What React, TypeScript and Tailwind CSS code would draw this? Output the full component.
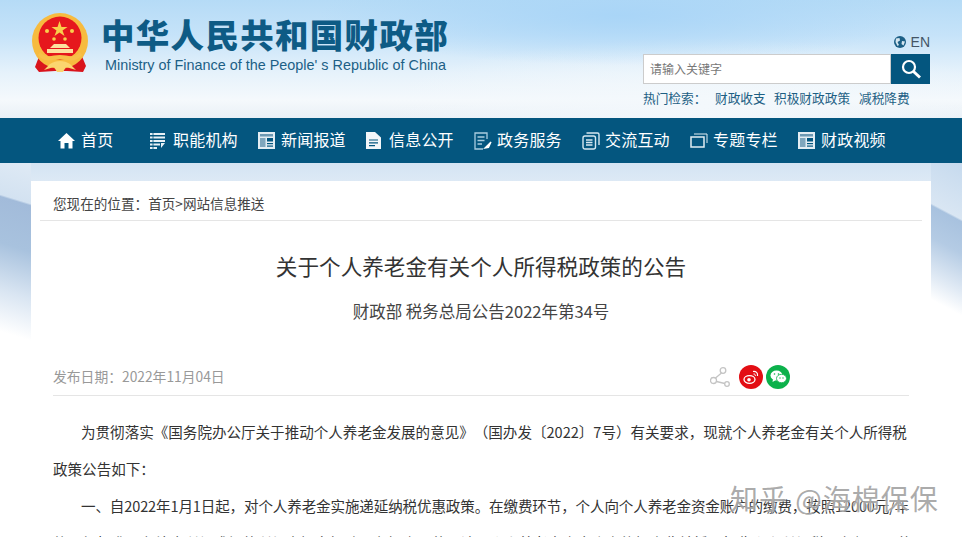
import type { ReactNode } from "react"

const cjk = "font-['Noto_Sans_CJK_SC','Liberation_Sans',sans-serif] [text-spacing-trim:space-all]"

function Emblem() {
  return (
    <svg width="60" height="62" viewBox="0 0 60 62">
      <path d="M9 42 L4 55 L8 60 L24 59 L36 59 L52 60 L55 54 L50 42 Z" fill="#d9141c" />
      <circle cx="29" cy="29" r="28" fill="#f7bb3f" />
      <circle cx="29" cy="26" r="21.5" fill="#e6171d" />
      <path d="M28.500 9 L30.500 15 L36.500 15 L31.500 18.500 L33.500 24 L28.500 20.500 L23.500 24 L25.500 18.500 L20.500 15 L26.500 15 Z" fill="#f9cf4c" />
      <circle cx="16" cy="19" r="2" fill="#f9cf4c" />
      <circle cx="41" cy="19" r="2" fill="#f9cf4c" />
      <circle cx="23" cy="27" r="1.800" fill="#f9cf4c" />
      <circle cx="34" cy="27" r="1.800" fill="#f9cf4c" />
      <path d="M19 36 L23 32 L35 32 L39 36 Z M16 37 H42 V41 H16 Z" fill="#fde2a0" />
      <path d="M7 43 C15 52 21 47 29 47 C37 47 43 52 51 43 L49 40 C43 47 37 43 29 43 C21 43 15 47 9 40 Z" fill="#f8c04a" />
      <path d="M19 52 C25 48 33 48 39 52 L45 58 L35 55 L32 60 H26 L23 55 L13 58 Z" fill="#fbd56f" />
    </svg>
  )
}

function HomeIcon() {
  return (
    <svg width="17" height="17" viewBox="0 0 17 17" fill="#fff">
      <path d="M8.500 1 L17 9 H14.500 V16.500 H10.500 V11 H6.500 V16.500 H2.500 V9 H0 Z" />
    </svg>
  )
}

function ListIcon() {
  return (
    <svg width="16" height="17" viewBox="0 0 16 17" fill="#e8f1f6">
      <path d="M0 1 H15 V3 H0 Z M0 4.500 H15 V6.500 H0 Z M0 8 H15 V10 H0 Z M0 11.500 H10 V13.500 H0 Z M0 15 H7 V17 H0 Z M11 11 H15 L11 16 Z" />
      <path d="M3 0 V17" stroke="#04567f" strokeWidth="0.800" />
    </svg>
  )
}

function NewsIcon() {
  return (
    <svg width="17" height="17" viewBox="0 0 17 17">
      <rect width="17" height="17" fill="#e3edf3" />
      <rect x="2" y="2" width="13" height="2.500" fill="#6d99b3" />
      <rect x="2" y="6" width="5.500" height="9" fill="#7fa6bd" />
      <rect x="9" y="6" width="6" height="3.500" fill="#04567f" />
      <rect x="9" y="11" width="6" height="1.200" fill="#04567f" />
      <rect x="9" y="13.500" width="6" height="1.200" fill="#04567f" />
    </svg>
  )
}

function DocIcon() {
  return (
    <svg width="15" height="17" viewBox="0 0 15 17">
      <path d="M0 0 H9 L15 5.500 V17 H0 Z" fill="#f2f6f9" />
      <path d="M3 8 H12 M3 10.800 H12 M3 13.600 H9" stroke="#04567f" strokeWidth="1.200" />
    </svg>
  )
}

function ServiceIcon() {
  return (
    <svg width="18" height="18" viewBox="0 0 18 18" fill="none" stroke="#a9cde0" strokeWidth="1.300">
      <path d="M13 7 V1 H1 V17 H9" />
      <path d="M3.500 5 H10.500 M3.500 8.500 H10.500 M3.500 12 H8" />
      <path d="M11 16 L17 10 L14.500 15.500 Z" fill="#fff" stroke="#fff" />
    </svg>
  )
}

function ChatIcon() {
  return (
    <svg width="18" height="18" viewBox="0 0 18 18" fill="none" stroke="#d6e8f1" strokeWidth="1.400">
      <rect x="1" y="4" width="12.500" height="13" rx="2" />
      <path d="M4.500 1 H15.500 Q17 1 17 2.500 V13" />
      <path d="M4 8 H10.500 M4 10.500 H10.500 M4 13 H10.500" />
    </svg>
  )
}

function TopicIcon() {
  return (
    <svg width="18" height="15" viewBox="0 0 18 15" fill="none" stroke="#e2eef4" strokeWidth="1.500">
      <rect x="1" y="4" width="13" height="10" />
      <path d="M4 1 H17 V10" strokeWidth="1" />
    </svg>
  )
}

function SearchIcon() {
  return (
    <svg width="20" height="20" viewBox="0 0 20 20" fill="none" stroke="#fff">
      <circle cx="8" cy="8" r="6" strokeWidth="2.200" />
      <path d="M12.500 12.500 L19 18.500" strokeWidth="3" />
    </svg>
  )
}

function GlobeIcon() {
  return (
    <svg width="12" height="12" viewBox="0 0 12 12">
      <circle cx="6" cy="6" r="6" fill="#1c5f86" />
      <path d="M2 2.500 L5.500 2 L6 4.500 L3.500 6 L5 9 L3.500 10 L1.500 6 Z M8 5 L11 5.500 L9.500 9.500 L7.500 8 Z" fill="#d5e6f0" />
    </svg>
  )
}

function ShareIcon() {
  return (
    <svg width="20" height="20" viewBox="0 0 20 20" fill="none" stroke="#c4c4c4" strokeWidth="1.300">
      <circle cx="13" cy="3.500" r="2.800" />
      <circle cx="3.500" cy="13.500" r="3" />
      <circle cx="17" cy="17" r="2.300" />
      <path d="M11.500 6 L5.500 11 M6.500 14.500 L14.800 16.500" />
    </svg>
  )
}

function WeiboIcon() {
  return (
    <div className="flex h-[24px] w-[24px] items-center justify-center rounded-full bg-[#e30e14]">
      <svg width="16" height="14" viewBox="0 0 16 14" fill="none" stroke="#fff">
        <ellipse cx="6.500" cy="9.500" rx="5.500" ry="3.800" strokeWidth="1.300" />
        <circle cx="6" cy="9.800" r="1.800" fill="#fff" stroke="none" />
        <path d="M10 1.500 C13 1 15 3 14.500 6" strokeWidth="1.200" />
        <path d="M10.500 4 C12 3.800 12.500 4.800 12.300 6" strokeWidth="1" />
      </svg>
    </div>
  )
}

function WechatIcon() {
  return (
    <div className="flex h-[24px] w-[24px] items-center justify-center rounded-full bg-[#0cb14b]">
      <svg width="17" height="14" viewBox="0 0 17 14">
        <ellipse cx="6.500" cy="5.500" rx="6" ry="5" fill="#fff" />
        <path d="M3 9 L2.500 12 L6 10 Z" fill="#fff" />
        <ellipse cx="11.500" cy="8.500" rx="5" ry="4.200" fill="#fff" stroke="#0cb14b" strokeWidth="0.800" />
        <circle cx="4.500" cy="4" r="0.800" fill="#0cb14b" />
        <circle cx="8.500" cy="4" r="0.800" fill="#0cb14b" />
        <circle cx="10" cy="8" r="0.700" fill="#0cb14b" />
        <circle cx="13" cy="8" r="0.700" fill="#0cb14b" />
      </svg>
    </div>
  )
}

const navItems: { label: string; icon: ReactNode; width: string }[] = [
  { label: "首页", icon: <HomeIcon />, width: "w-[92px]" },
  { label: "职能机构", icon: <ListIcon />, width: "w-[108px]" },
  { label: "新闻报道", icon: <NewsIcon />, width: "w-[108px]" },
  { label: "信息公开", icon: <DocIcon />, width: "w-[108px]" },
  { label: "政务服务", icon: <ServiceIcon />, width: "w-[108px]" },
  { label: "交流互动", icon: <ChatIcon />, width: "w-[108px]" },
  { label: "专题专栏", icon: <TopicIcon />, width: "w-[108px]" },
  { label: "财政视频", icon: <NewsIcon />, width: "w-[108px]" },
]

export default function App() {
  return (
    <div className={`relative h-[537px] w-[962px] overflow-hidden bg-white ${cjk}`}>
      <header className="flex h-[118px] justify-between bg-[radial-gradient(ellipse_300px_50px_at_620px_15px,#a9d5f7_0%,transparent_100%),radial-gradient(ellipse_320px_70px_at_700px_108px,#f3f8fc_0%,transparent_100%),linear-gradient(180deg,#b5dbf6_0%,#c6e3f9_30%,#e6f2fb_62%,#f5f9fc_85%,#e9f0f6_100%)] pl-[31px] pr-[32px]">
        <div className="flex items-start pt-[12px]">
          <Emblem />
          <div className="ml-[10px] flex flex-col">
            <div className="mt-[1px] h-[39px] whitespace-nowrap text-[33.500px] leading-[41px] font-black tracking-[1.300px] text-[#0e5b85]">
              中华人民共和国财政部
            </div>
            <div className="mt-[4px] ml-[4px] font-['Liberation_Sans',sans-serif] text-[14.400px] leading-[18px] whitespace-nowrap text-[#1c5f86]">
              Ministry of Finance of the People' s Republic of China
            </div>
          </div>
        </div>
        <div className="flex w-[287px] flex-col pt-[33px]">
          <div className="flex h-[18px] items-center justify-end gap-[5px] font-['Liberation_Sans',sans-serif] text-[14px] text-[#445566]">
            <GlobeIcon />
            <span>EN</span>
          </div>
          <div className="mt-[3px] flex h-[30px]">
            <div className="flex flex-1 items-center border border-[#cccccc] bg-white pl-[6px] text-[12px] text-[#777777]">
              请输入关键字
            </div>
            <button className="flex w-[39px] items-center justify-center bg-[#04567f] pl-[1px]">
              <SearchIcon />
            </button>
          </div>
          <div className="mt-[5px] flex h-[18px] items-center whitespace-nowrap text-[12.700px] text-[#1d5f84]">
            <span className="w-[72px]">热门检索：</span>
            <span className="w-[59px]">财政收支</span>
            <span className="w-[85px]">积极财政政策</span>
            <span>减税降费</span>
          </div>
        </div>
      </header>

      <nav className="flex h-[45px] items-center bg-[#04567f] pl-[58px]">
        {navItems.map((item) => (
          <div key={item.label} className={`flex items-center ${item.width}`}>
            <div className="flex w-[23px] shrink-0 items-center">{item.icon}</div>
            <span className="-mt-[3px] text-[16px] leading-[20px] tracking-[0.200px] whitespace-nowrap text-white">
              {item.label}
            </span>
          </div>
        ))}
      </nav>

      <main className="flex h-[374px]">
        <div className="w-[31px] bg-[linear-gradient(197deg,#dfeaf5_0px,#d3e2f1_39px,#a2bbda_41px,#a8c2de_85px,#d9e5f2_130px,#ffffff_170px)]" />
        <div className="w-[900px] bg-[linear-gradient(180deg,#d4e4f3_0px,#dde9f5_18px,#ffffff_18px)] pt-[18px]">
          <div className="h-[400px] bg-white px-[22px]">
            <div className="-mx-[13px] h-[40px] border-b border-[#e5e5e5] px-[13px] text-[13.600px] leading-[44px] text-[#444444]">
              您现在的位置：首页&gt;网站信息推送
            </div>
            <h1 className="mt-[29px] text-center text-[21.600px] leading-[32px] font-normal text-[#333333]">
              关于个人养老金有关个人所得税政策的公告
            </h1>
            <p className="mt-[17px] text-center text-[16.500px] leading-[24px] text-[#444444]">
              财政部 税务总局公告2022年第34号
            </p>
            <div className="mt-[34px] flex h-[39px] items-start justify-between border-b border-[#e5e5e5] pt-[5px]">
              <span className="text-[13.800px] leading-[28px] text-[#999999]">发布日期：2022年11月04日</span>
              <div className="mt-[3px] mr-[119px] flex items-center gap-[3px]">
                <div className="mr-[6px]">
                  <ShareIcon />
                </div>
                <WeiboIcon />
                <WechatIcon />
              </div>
            </div>
            <div className="mt-[17px] w-[856px] text-[14.550px] leading-[37px] text-[#333333]">
              <p className="indent-[28px] whitespace-nowrap">
                为贯彻落实《国务院办公厅关于推动个人养老金发展的意见》（国办发〔2022〕7号）有关要求，现就个人养老金有关个人所得税
              </p>
              <p>政策公告如下：</p>
              <p className="indent-[28px] tracking-[-0.130px] whitespace-nowrap">
                一、自2022年1月1日起，对个人养老金实施递延纳税优惠政策。在缴费环节，个人向个人养老金资金账户的缴费，按照12000元/年
              </p>
              <p className="whitespace-nowrap">
                的限额标准，在综合所得或经营所得中据实扣除；在投资环节，计入个人养老金资金账户的投资收益暂不征收个人所得税；在领取环节
              </p>
            </div>
          </div>
        </div>
        <div className="w-[31px] bg-[linear-gradient(208deg,#c6daee_0px,#d9e6f3_50px,#a8c2df_52px,#b4cbe4_80px,#e2ebf5_115px,#ffffff_135px)]" />
      </main>

      <div className="absolute left-[730px] top-[479px] text-[28px] leading-[38px] tracking-[1px] whitespace-nowrap text-[#8f8f8f]/75 [text-shadow:0_0_2px_#ffffff]">
        知乎 @海棉保保
      </div>
    </div>
  )
}
